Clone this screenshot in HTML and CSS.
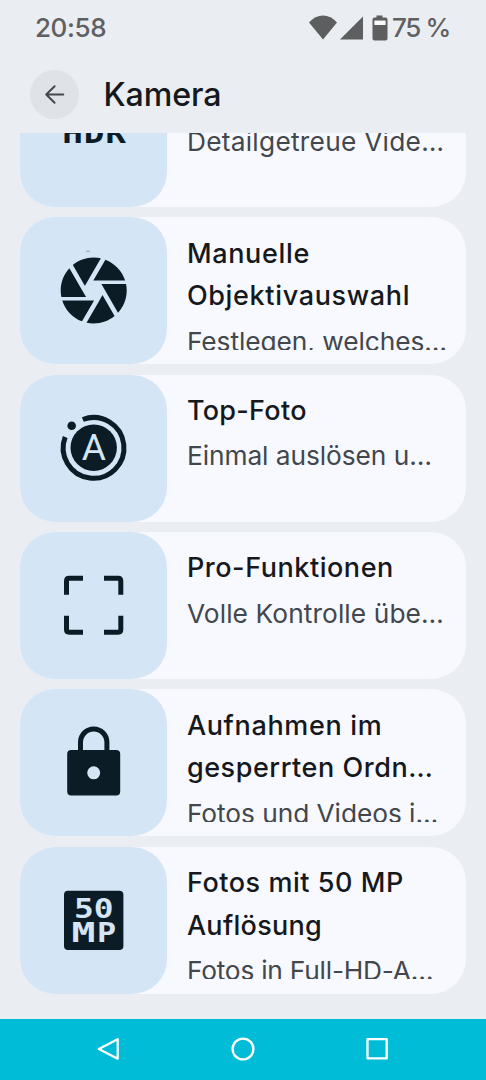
FILE: index.html
```
<!DOCTYPE html>
<html lang="de">
<head>
<meta charset="utf-8">
<title>Kamera</title>
<link rel="stylesheet" href="styles.css">
</head>
<body>
<div class="screen">
  <header class="top">
    <div class="status">
      <span class="clock">20:58</span>
      <svg class="status-icons" viewBox="0 0 80 28" width="80" height="28">
        <path d="M0 8.5C8-.8 20-.8 28 8.5L14 25.5z"/>
        <path d="M31 25.5h23V2.5z"/>
        <path fill-rule="evenodd" d="M67.5 1.5h6v2h3a2 2 0 0 1 2 2v19a2 2 0 0 1-2 2h-11a2 2 0 0 1-2-2v-19a2 2 0 0 1 2-2h2zM65.6 6.7v4.3h10.8V6.7z"/>
        <path class="battery-gap" d="M65.6 6.7h10.8V11H65.6z"/>
      </svg>
      <span class="charge">75 %</span>
    </div>
    <div class="titlebar">
      <div class="back">
        <svg viewBox="0 0 49 49" width="49" height="49"><path d="M33.3 24.5H16.2M24.6 16.2l-8.4 8.3 8.4 8.3"/></svg>
      </div>
      <h1 class="title">Kamera</h1>
    </div>
  </header>

  <main class="list">
    <article class="card card-scrolled">
      <div class="tile">
        <svg viewBox="0 0 147 147"><text class="hdr" transform="translate(42.2 83.3) scale(1.25 1)">HDR</text></svg>
      </div>
      <div class="copy">
        <p class="desc wide">Detailgetreue Vide…</p>
      </div>
    </article>

    <article class="card">
      <div class="tile">
        <svg viewBox="0 0 147 147">
          <path transform="translate(34.1 33.9) scale(3.3)" d="M9.4 10.5l4.77-8.26C13.47 2.09 12.75 2 12 2c-2.4 0-4.6.85-6.32 2.25l3.66 6.35.06-.1zM21.54 9c-.92-2.92-3.15-5.26-6-6.34L11.88 9h9.66zm.26 1h-7.49l.29.5 4.76 8.25C21 16.97 22 14.61 22 12c0-.69-.07-1.35-.2-2zM8.54 12l-3.9-6.75C3.01 7.03 2 9.39 2 12c0 .69.07 1.35.2 2h7.49l-1.15-2zm-6.08 3c.92 2.92 3.15 5.26 6 6.34L12.12 15H2.46zm11.27 0l-3.9 6.76c.7.15 1.42.24 2.17.24 2.4 0 4.6-.85 6.32-2.25l-3.66-6.35-.93 1.6z"/>
          <path class="speck" d="M65.8 33.8h4.4l-1 1h-2.4z"/>
        </svg>
      </div>
      <div class="copy">
        <h2 class="name"><span class="line wide">Manuelle</span><span class="line wide">Objektivauswahl</span></h2>
        <p class="desc">Festlegen, welches…</p>
      </div>
    </article>

    <article class="card">
      <div class="tile">
        <svg viewBox="0 0 147 147">
          <g transform="translate(0 -.6)">
            <path class="ring" d="M62.8 45.1A30.4 30.4 0 1 1 45.2 62.6"/>
            <circle cx="73.7" cy="73.3" r="23.2"/>
            <circle cx="51.7" cy="51.3" r="4.3"/>
            <text class="letter" x="73.7" y="86">A</text>
          </g>
        </svg>
      </div>
      <div class="copy">
        <h2 class="name"><span class="line tight">Top-Foto</span></h2>
        <p class="desc">Einmal auslösen u…</p>
      </div>
    </article>

    <article class="card">
      <div class="tile">
        <svg viewBox="0 0 147 147">
          <path class="frame" d="M46.5 62.8V49q0-2.7 2.7-2.7H63M84 46.3h14.1q2.7 0 2.7 2.7v13.8M100.8 83.8v13.8q0 2.7-2.7 2.7H84M63 100.3H49.2q-2.7 0-2.7-2.7V83.8"/>
        </svg>
      </div>
      <div class="copy">
        <h2 class="name"><span class="line">Pro-Funktionen</span></h2>
        <p class="desc medium">Volle Kontrolle übe…</p>
      </div>
    </article>

    <article class="card">
      <div class="tile">
        <svg viewBox="0 0 147 147">
          <path class="ring" d="M60.5 63V53.2a13.2 13.2 0 0 1 26.4 0V63"/>
          <path fill-rule="evenodd" d="M51.2 61h45a4 4 0 0 1 4 4v37.6a4 4 0 0 1-4 4h-45a4 4 0 0 1-4-4V65a4 4 0 0 1 4-4zM73.7 77.3a6.5 6.5 0 1 0 0 13 6.5 6.5 0 0 0 0-13z"/>
        </svg>
      </div>
      <div class="copy">
        <h2 class="name"><span class="line wide">Aufnahmen im</span><span class="line">gesperrten Ordn…</span></h2>
        <p class="desc">Fotos und Videos i…</p>
      </div>
    </article>

    <article class="card">
      <div class="tile">
        <svg viewBox="0 0 147 147">
          <rect x="44" y="43.7" width="59.4" height="59.4" rx="4"/>
          <text class="mp" transform="translate(54 70.6) scale(1.24 1)">50</text>
          <text class="mp" transform="translate(51.6 95.4) scale(1.5 1)">M</text>
          <text class="mp" transform="translate(77 95.4) scale(1.2 1)">P</text>
        </svg>
      </div>
      <div class="copy">
        <h2 class="name"><span class="line">Fotos mit 50 MP</span><span class="line tight">Auflösung</span></h2>
        <p class="desc narrow">Fotos in Full-HD-A…</p>
      </div>
    </article>
  </main>

  <nav class="nav">
    <svg viewBox="0 0 24 24"><path d="M20.7 2.3v19.4L1.8 12z"/></svg>
    <svg viewBox="0 0 24 24"><circle cx="12" cy="12" r="10.4"/></svg>
    <svg viewBox="0 0 24 24"><path d="M2.5 2.2h19.2v19.2H2.5z"/></svg>
  </nav>
</div>
</body>
</html>
```
FILE: styles.css
```
* { box-sizing: border-box; margin: 0; padding: 0; }

body {
  background: #eaedf2;
  font-family: Inter, "Open Sans", sans-serif;
}

.screen {
  display: flex;
  flex-direction: column;
  width: 486px;
  height: 1080px;
  overflow: hidden;
}

.top { flex: none; height: 133.3px; }

.status {
  display: flex;
  height: 56px;
  padding: 12px 34px 0 35px;
  color: #5f6062;
  font-size: 26px;
  font-weight: 450;
  line-height: 32px;
}
.clock { letter-spacing: -0.4px; }
.status-icons { margin: 1.5px 3px 0 auto; fill: #5d5e60; }
.battery-gap { fill: #f8f9fb; }
.charge { width: 60px; letter-spacing: -1.4px; white-space: nowrap; }

.titlebar { display: flex; align-items: center; height: 76px; padding-left: 30px; }
.back { width: 49px; height: 49px; border-radius: 50%; background: #dfe2e7; }
.back svg {
  display: block;
  fill: none;
  stroke: #44474b;
  stroke-width: 2;
  stroke-linecap: round;
  stroke-linejoin: round;
}
.title {
  margin: 1px 0 0 24.5px;
  color: #15181c;
  font-size: 32.2px;
  font-weight: 500;
  letter-spacing: -0.1px;
  line-height: 40px;
}

.list {
  display: flex;
  flex: 1;
  flex-direction: column;
  gap: 10.33px;
  min-height: 0;
  padding: 0 20px;
  overflow: hidden;
}

.card {
  display: flex;
  flex: none;
  height: 147px;
  border-radius: 35px;
  background: #f8f9ff;
}
.card-scrolled { margin-top: -73.3px; }

.tile {
  flex: none;
  width: 147.3px;
  height: 147px;
  border-radius: 35px;
  background: #d4e5f6;
}
.tile svg { display: block; width: 147px; height: 147px; fill: #0b1c27; }
.speck { fill: #8493a1; }
.tile .ring, .tile .frame { fill: none; stroke: #0b1c27; stroke-width: 5; }
.hdr { font: 700 27.5px "DejaVu Sans Mono", monospace; letter-spacing: 0.7px; }
.letter { fill: #d4e5f6; font: 400 37px Roboto, sans-serif; text-anchor: middle; }
.mp { fill: #d4e5f6; font: 700 26.5px "DejaVu Sans Mono", monospace; }

.copy { height: 132.4px; padding: 15.3px 0 0 19.6px; overflow: hidden; white-space: nowrap; }
.card-scrolled .copy { padding-top: 57.9px; }

.name {
  color: #15181c;
  font-size: 27px;
  font-weight: 500;
  letter-spacing: 0.55px;
  line-height: 42.6px;
}
.line { display: block; }
.line.wide { letter-spacing: 0.66px; }
.line.tight { letter-spacing: 0.3px; }

.desc {
  margin-top: 1.8px;
  color: #42474d;
  font-size: 26.3px;
  letter-spacing: -0.06px;
  line-height: 44px;
}
.desc.wide { letter-spacing: 0.26px; }
.desc.medium { letter-spacing: 0.1px; }
.desc.narrow { letter-spacing: -0.22px; }

.nav {
  display: flex;
  flex: none;
  align-items: center;
  justify-content: space-between;
  height: 61.4px;
  padding: 0 97px;
  background: #00bcd7;
}
.nav svg {
  width: 24px;
  height: 24px;
  fill: none;
  stroke: #fff;
  stroke-width: 2.3;
  stroke-linejoin: round;
}
```
